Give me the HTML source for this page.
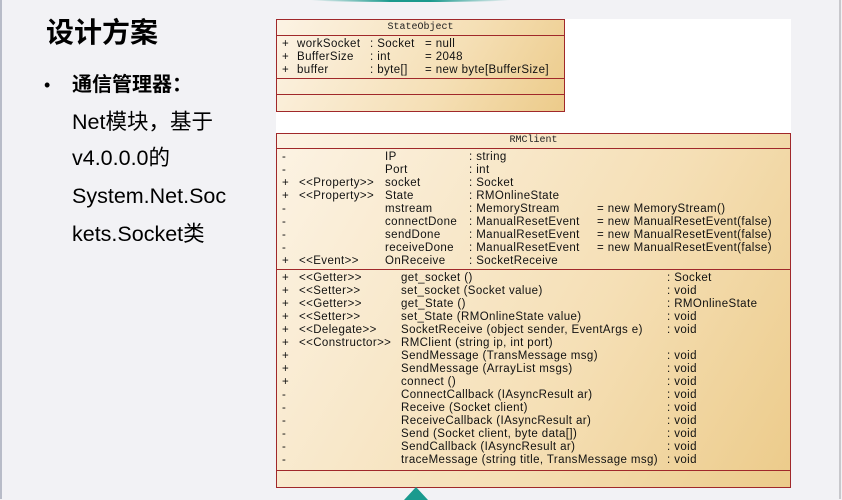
<!DOCTYPE html>
<html><head><meta charset="utf-8"><style>
body{margin:0;width:842px;height:499px;background:#f2f2f5;position:relative;overflow:hidden;font-family:"Liberation Sans","Noto Sans CJK SC",sans-serif}
.a{position:absolute;white-space:nowrap}
.box{position:absolute;border:1px solid #a0282a;background:linear-gradient(120deg,#fcf3e4 0%,#f5dfb5 60%,#eccb8a 100%);box-sizing:border-box}
.hd{position:absolute;left:0;right:0;border-bottom:1px solid #a0282a;text-align:center;font-family:"Liberation Mono",monospace;font-size:10px;color:#222}
.sep{position:absolute;left:0;right:0;border-top:1px solid #a0282a}
.r{position:absolute;font-size:11.5px;letter-spacing:0.4px;color:#111;white-space:nowrap;line-height:13px}
.t{position:absolute;color:#000;white-space:nowrap;font-size:21.5px;line-height:24px}
</style></head><body>
<div class="a" style="left:0;top:0;width:2px;height:499px;background:#b8bcc8"></div>
<div class="a" style="left:839px;top:0;width:2px;height:499px;background:#c8c8cc"></div>
<div class="a" style="left:310px;top:-2px;width:200px;height:4px;background:linear-gradient(90deg,#f2f2f5,#1a9a8e 40%,#1a9a8e 60%,#f2f2f5);border-radius:50%"></div>
<div class="a" style="left:276px;top:19px;width:515px;height:116px;background:#fff"></div>
<div class="t" style="left:46px;top:17px;font-size:28px;line-height:32px;font-weight:bold">设计方案</div>
<div class="t" style="left:44px;top:73px;font-size:18px">•</div>
<div class="t" style="left:72px;top:73px;font-size:20px;font-weight:bold">通信管理器：</div>
<div class="t" style="left:72px;top:110px">Net模块，基于</div>
<div class="t" style="left:72px;top:146px">v4.0.0.0的</div>
<div class="t" style="left:72px;top:184px">System.Net.Soc</div>
<div class="t" style="left:72px;top:222px">kets.Socket类</div>

<div class="box" style="left:276px;top:19px;width:289px;height:93px">
<div class="hd" style="top:0;height:15px;line-height:15px">StateObject</div>
<div class="sep" style="top:58px"></div><div class="sep" style="top:74px"></div>
</div>
<div class="r" style="left:282px;top:38px">+</div><div class="r" style="left:297px;top:38px">workSocket</div><div class="r" style="left:370px;top:38px">: Socket</div><div class="r" style="left:425px;top:38px">= null</div>
<div class="r" style="left:282px;top:51px">+</div><div class="r" style="left:297px;top:51px">BufferSize</div><div class="r" style="left:370px;top:51px">: int</div><div class="r" style="left:425px;top:51px">= 2048</div>
<div class="r" style="left:282px;top:64px">+</div><div class="r" style="left:297px;top:64px">buffer</div><div class="r" style="left:370px;top:64px">: byte[]</div><div class="r" style="left:425px;top:64px">= new byte[BufferSize]</div>

<div class="box" style="left:276px;top:133px;width:515px;height:355px">
<div class="hd" style="top:0;height:14px;line-height:14px">RMClient</div>
<div class="sep" style="top:135px"></div><div class="sep" style="top:336px"></div>
</div>
<div id="rm"></div>
<div class="a" style="left:404px;top:487px;width:0;height:0;border-left:12px solid transparent;border-right:12px solid transparent;border-bottom:13px solid #1a9a8e"></div>
<script>
var A=[["-","","IP",": string",""],["-","","Port",": int",""],["+","<<Property>>","socket",": Socket",""],["+","<<Property>>","State",": RMOnlineState",""],["-","","mstream",": MemoryStream","= new MemoryStream()"],["-","","connectDone",": ManualResetEvent","= new ManualResetEvent(false)"],["-","","sendDone",": ManualResetEvent","= new ManualResetEvent(false)"],["-","","receiveDone",": ManualResetEvent","= new ManualResetEvent(false)"],["+","<<Event>>","OnReceive",": SocketReceive",""]];
var M=[["+","<<Getter>>","get_socket ()",": Socket"],["+","<<Setter>>","set_socket (Socket value)",": void"],["+","<<Getter>>","get_State ()",": RMOnlineState"],["+","<<Setter>>","set_State (RMOnlineState value)",": void"],["+","<<Delegate>>","SocketReceive (object sender, EventArgs e)",": void"],["+","<<Constructor>>","RMClient (string ip, int port)",""],["+","","SendMessage (TransMessage msg)",": void"],["+","","SendMessage (ArrayList msgs)",": void"],["+","","connect ()",": void"],["-","","ConnectCallback (IAsyncResult ar)",": void"],["-","","Receive (Socket client)",": void"],["-","","ReceiveCallback (IAsyncResult ar)",": void"],["-","","Send (Socket client, byte data[])",": void"],["-","","SendCallback (IAsyncResult ar)",": void"],["-","","traceMessage (string title, TransMessage msg)",": void"]];
var h="";function d(x,y,s){if(s)h+='<div class="r" style="left:'+x+'px;top:'+y+'px">'+s.replace(/</g,"&lt;").replace(/>/g,"&gt;")+'</div>';}
A.forEach(function(r,i){var y=151+i*13;d(282,y,r[0]);d(299,y,r[1]);d(385,y,r[2]);d(469,y,r[3]);d(597,y,r[4]);});
M.forEach(function(r,i){var y=272+i*13;d(282,y,r[0]);d(299,y,r[1]);d(401,y,r[2]);d(667,y,r[3]);});
document.getElementById("rm").innerHTML=h;
</script>
</body></html>
